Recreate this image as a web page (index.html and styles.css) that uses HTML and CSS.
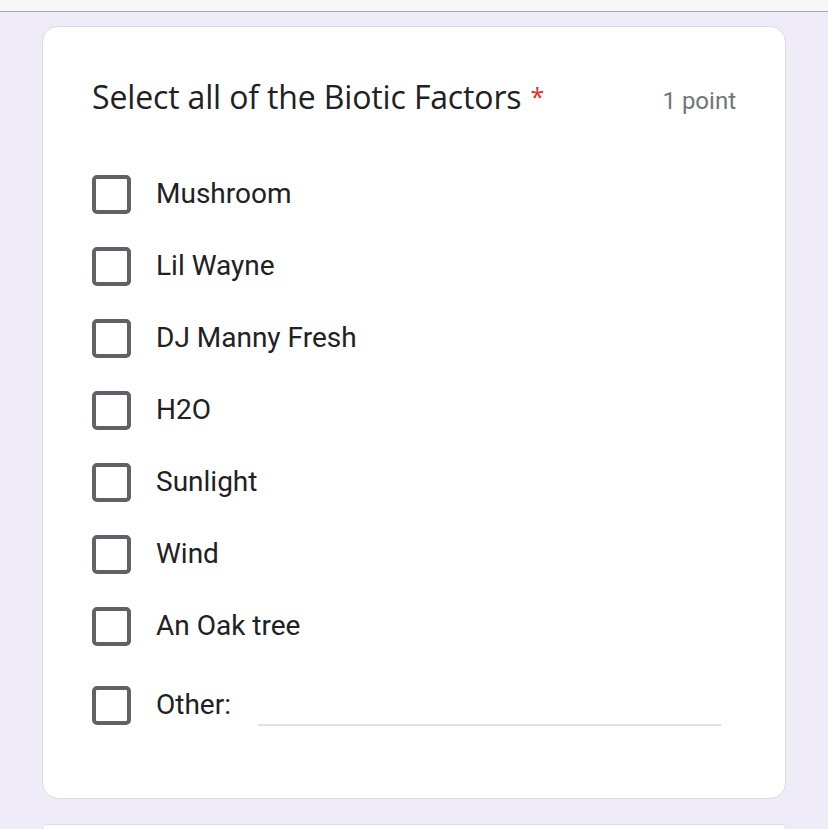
FILE: index.html
```html
<!DOCTYPE html>
<html>
<head>
<meta charset="utf-8">
<link rel="stylesheet" href="styles.css">
</head>
<body>
<div class="topbar"></div>
<main class="page">
  <section class="card">
    <div class="head">
      <div class="title">Select all of the Biotic Factors<span class="req">*</span></div>
      <div class="points">1 point</div>
    </div>
    <div class="options">
      <label class="opt"><span class="box"></span><span class="txt">Mushroom</span></label>
      <label class="opt"><span class="box"></span><span class="txt">Lil Wayne</span></label>
      <label class="opt"><span class="box"></span><span class="txt">DJ Manny Fresh</span></label>
      <label class="opt"><span class="box"></span><span class="txt">H2O</span></label>
      <label class="opt"><span class="box"></span><span class="txt">Sunlight</span></label>
      <label class="opt"><span class="box"></span><span class="txt">Wind</span></label>
      <label class="opt"><span class="box"></span><span class="txt">An Oak tree</span></label>
      <div class="opt other"><span class="box"></span><span class="txt">Other:</span><span class="line"></span></div>
    </div>
  </section>
  <section class="card next"></section>
</main>
</body>
</html>
```

FILE: styles.css
```css
html, body {
  margin: 0;
  padding: 0;
}
body {
  background: #efebf8;
  font-family: Roboto, "Liberation Sans", sans-serif;
  overflow: hidden;
  height: 829px;
}
.topbar {
  height: 11px;
  background: #f7f7f7;
  border-bottom: 1px solid #a9a9ad;
}
.page {
  padding: 14px 42px 0 42px;
}
.card {
  background: #fff;
  border: 1px solid #dadce0;
  border-radius: 16px;
  box-sizing: border-box;
  width: 744px;
  height: 773px;
  padding: 0 49px 0 49px;
}
.card.next {
  margin-top: 25px;
  height: 5px;
  border-bottom: 0;
  border-radius: 16px 16px 0 0;
}
.head {
  display: flex;
  justify-content: space-between;
  align-items: baseline;
  padding-top: 49px;
  height: 82px;
  box-sizing: border-box;
}
.title {
  font-family: "Open Sans", Roboto, sans-serif;
  font-size: 32px;
  line-height: 40px;
  color: #202124;
  letter-spacing: -0.15px;
}
.req {
  color: #d93025;
  font-size: 25px;
  margin-left: 9px;
  vertical-align: 3px;
}
.points {
  font-size: 24px;
  color: #70757a;
}
.options {
  display: flex;
  flex-direction: column;
  padding-top: 49px;
}
.opt {
  display: flex;
  align-items: center;
  height: 72px;
}
.box {
  width: 39px;
  height: 39px;
  box-sizing: border-box;
  border: 4px solid #5f6368;
  border-radius: 5px;
  flex: none;
}
.txt {
  margin-left: 25px;
  font-size: 28px;
  line-height: 34px;
  padding-bottom: 1px;
  color: #202124;
}
.other {
  height: 86px;
  align-items: center;
}
.line {
  flex: 1;
  align-self: flex-end;
  margin: 0 15px 22px 27px;
  border-bottom: 2px solid #e0e0e0;
}
```
